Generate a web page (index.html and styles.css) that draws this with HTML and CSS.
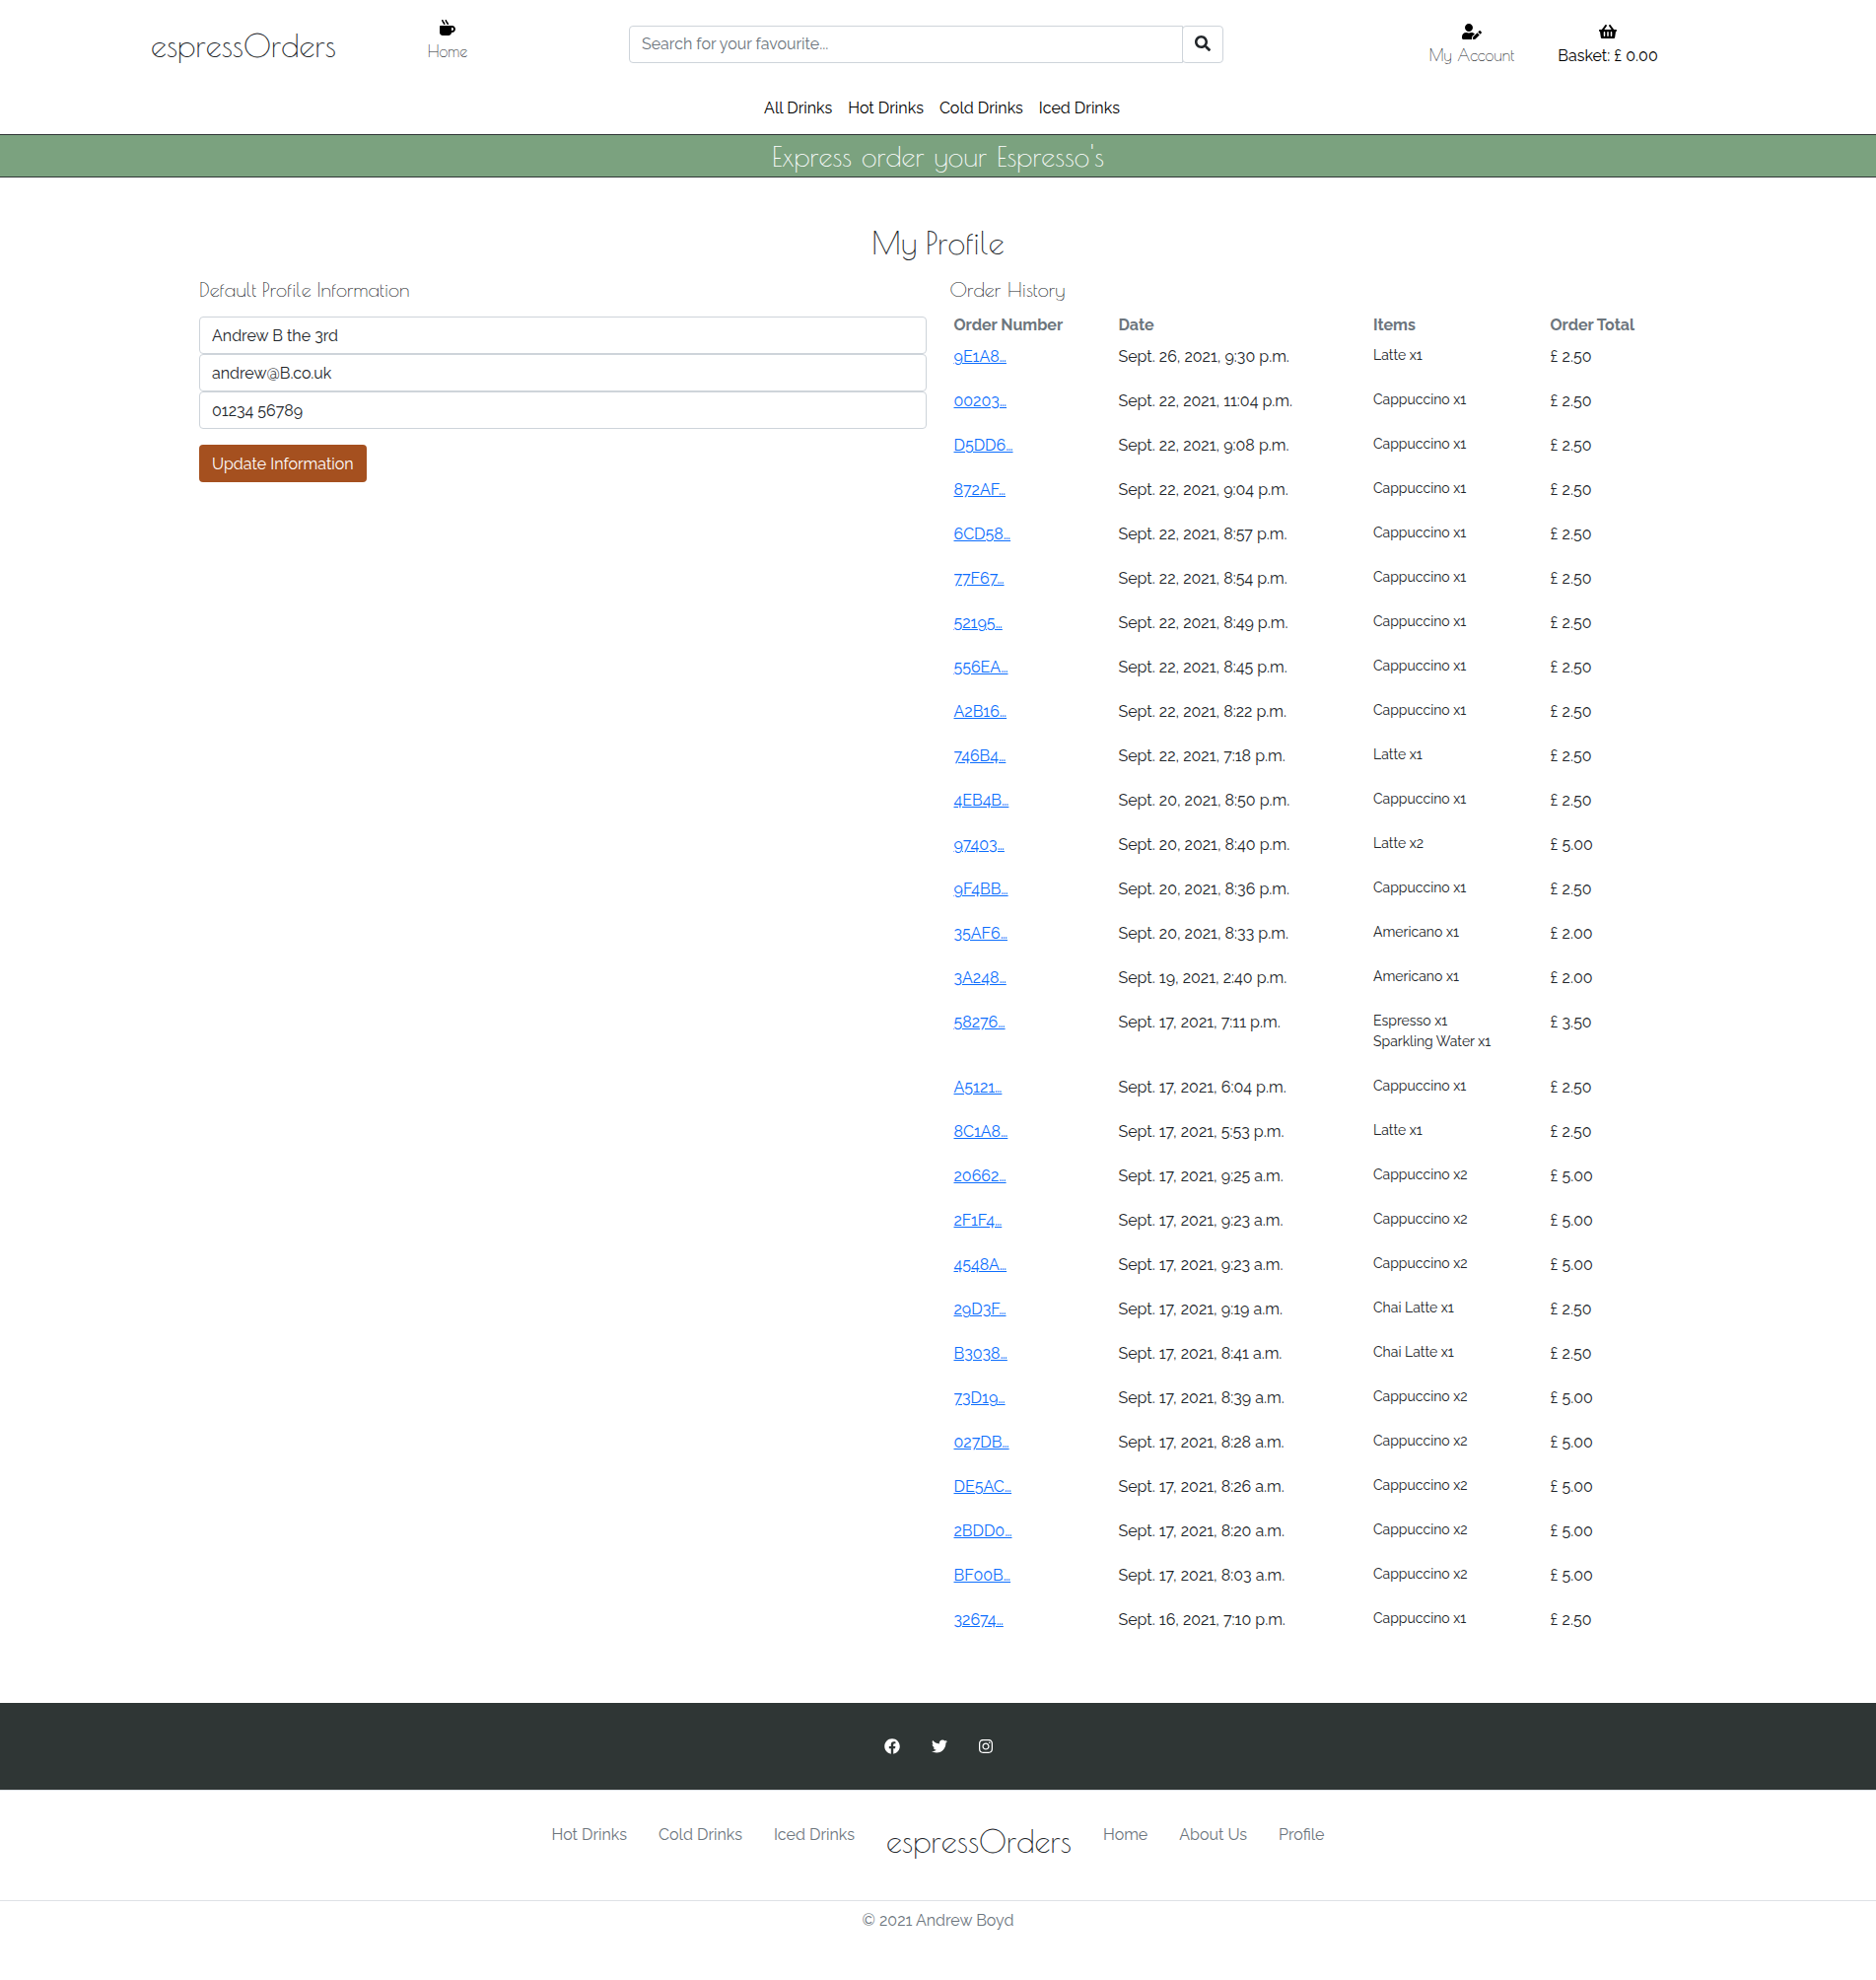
FILE: index.html
```html
<!DOCTYPE html>
<html lang="en">
<head>
<meta charset="utf-8">
<title>espressOrders - My Profile</title>
<link rel="stylesheet" href="styles.css">
</head>
<body>
<header class="header">
  <div class="header-main">
    <a class="logo" href="#">espressOrders</a>
    <a class="nav-icon home" href="#">
      <svg width="16" height="16" viewBox="0 0 512 512"><path d="M127.1 146.5c1.3 7.7 8 13.5 16 13.5h16.5c9.8 0 17.6-8.5 16.3-18-3.8-28.2-16.4-54.2-36.6-74.7-14.4-14.7-23.6-33.3-26.4-53.5C111.8 5.9 105 0 96.8 0H80.4C70.6 0 63 8.5 64.1 18c3.9 31.9 18 61.3 40.6 84.4 12 12.2 19.7 27.5 22.4 44.1zm112 0c1.3 7.7 8 13.5 16 13.5h16.5c9.8 0 17.6-8.5 16.3-18-3.8-28.2-16.4-54.2-36.6-74.7-14.4-14.7-23.6-33.3-26.4-53.5C223.8 5.9 217 0 208.8 0h-16.4c-9.8 0-17.5 8.5-16.3 18 3.9 31.9 18 61.3 40.6 84.4 12 12.2 19.7 27.5 22.4 44.1zM400 192H32c-17.7 0-32 14.3-32 32v192c0 53 43 96 96 96h192c53 0 96-43 96-96h16c61.8 0 112-50.2 112-112s-50.2-112-112-112zm0 160h-16v-96h16c26.5 0 48 21.5 48 48s-21.5 48-48 48z"/></svg>
      <span class="thin">Home</span>
    </a>
    <form class="search">
      <input class="search-input" type="text" placeholder="Search for your favourite...">
      <button class="search-btn" type="button" aria-label="Search"><svg width="16" height="16" viewBox="0 0 512 512"><path d="M505 442.7L405.3 343c-4.5-4.5-10.6-7-17-7H372c27.6-35.3 44-79.7 44-128C416 93.1 322.9 0 208 0S0 93.1 0 208s93.1 208 208 208c48.3 0 92.7-16.4 128-44v16.3c0 6.4 2.5 12.5 7 17l99.7 99.7c9.4 9.4 24.6 9.4 33.9 0l28.3-28.3c9.4-9.4 9.4-24.6.1-34zM208 336c-70.7 0-128-57.2-128-128 0-70.7 57.2-128 128-128 70.7 0 128 57.2 128 128 0 70.7-57.2 128-128 128z"/></svg></button>
    </form>
    <a class="nav-icon account" href="#">
      <svg width="20" height="16" viewBox="0 0 640 512"><path d="M224 256c70.7 0 128-57.3 128-128S294.7 0 224 0 96 57.3 96 128s57.3 128 128 128zm89.6 32h-16.7c-22.2 10.2-46.9 16-72.9 16s-50.6-5.8-72.9-16h-16.7C60.2 288 0 348.2 0 422.4V464c0 26.5 21.5 48 48 48h274.9c-2.4-6.8-3.4-14-2.6-21.3l6.8-60.9 1.2-11.1 7.9-7.9 77.3-77.3c-24.5-27.7-60-45.5-99.9-45.5zm45.3 145.3l-6.8 61c-1.1 10.2 7.5 18.8 17.6 17.6l60.9-6.8 137.9-137.9-71.7-71.7-137.9 137.8zM633 268.9L595.1 231c-9.3-9.3-24.5-9.3-33.8 0l-37.8 37.8-4.1 4.1 71.8 71.7 41.8-41.8c9.3-9.4 9.3-24.5 0-33.9z"/></svg>
      <span class="thin">My Account</span>
    </a>
    <a class="nav-icon basket" href="#">
      <svg width="18" height="16" viewBox="0 0 576 512"><path d="M576 216v16c0 13.255-10.745 24-24 24h-8l-26.113 182.788C514.509 462.435 494.257 480 470.37 480H105.63c-23.887 0-44.139-17.565-47.518-41.212L32 256h-8c-13.255 0-24-10.745-24-24v-16c0-13.255 10.745-24 24-24h67.341l106.78-146.821c10.395-14.292 30.407-17.453 44.701-7.058 14.293 10.395 17.453 30.408 7.058 44.701L170.477 192h235.046L326.12 82.821c-10.395-14.292-7.234-34.306 7.059-44.701 14.291-10.395 34.306-7.235 44.701 7.058L484.659 192H552c13.255 0 24 10.745 24 24zM312 392V280c0-13.255-10.745-24-24-24s-24 10.745-24 24v112c0 13.255 10.745 24 24 24s24-10.745 24-24zm112 0V280c0-13.255-10.745-24-24-24s-24 10.745-24 24v112c0 13.255 10.745 24 24 24s24-10.745 24-24zm-224 0V280c0-13.255-10.745-24-24-24s-24 10.745-24 24v112c0 13.255 10.745 24 24 24s24-10.745 24-24z"/></svg>
      <span>Basket: £ 0.00</span>
    </a>
  </div>
  <nav class="main-nav">
    <a href="#">All Drinks</a><a href="#">Hot Drinks</a><a href="#">Cold Drinks</a><a href="#">Iced Drinks</a>
  </nav>
</header>
<div class="banner">Express order your Espresso's</div>

<main class="main">
  <h1 class="title">My Profile</h1>
  <div class="columns">
    <section class="column">
      <h2 class="subtitle info">Default Profile Information</h2>
      <form class="profile-form">
        <input class="field" type="text" value="Andrew B the 3rd">
        <input class="field" type="text" value="andrew@B.co.uk">
        <input class="field" type="text" value="01234 56789">
        <button class="update-btn" type="button">Update Information</button>
      </form>
    </section>
    <section class="column">
      <h2 class="subtitle">Order History</h2>
      <table class="orders">
        <thead><tr><th class="c-num">Order Number</th><th class="c-date">Date</th><th class="c-items">Items</th><th class="c-total">Order Total</th></tr></thead>
        <tbody>
          <tr><td><a href="#">9E1A8…</a></td><td>Sept. 26, 2021, 9:30 p.m.</td><td>Latte x1</td><td>£ 2.50</td></tr>
          <tr><td><a href="#">00203…</a></td><td>Sept. 22, 2021, 11:04 p.m.</td><td>Cappuccino x1</td><td>£ 2.50</td></tr>
          <tr><td><a href="#">D5DD6…</a></td><td>Sept. 22, 2021, 9:08 p.m.</td><td>Cappuccino x1</td><td>£ 2.50</td></tr>
          <tr><td><a href="#">872AF…</a></td><td>Sept. 22, 2021, 9:04 p.m.</td><td>Cappuccino x1</td><td>£ 2.50</td></tr>
          <tr><td><a href="#">6CD58…</a></td><td>Sept. 22, 2021, 8:57 p.m.</td><td>Cappuccino x1</td><td>£ 2.50</td></tr>
          <tr><td><a href="#">77F67…</a></td><td>Sept. 22, 2021, 8:54 p.m.</td><td>Cappuccino x1</td><td>£ 2.50</td></tr>
          <tr><td><a href="#">52195…</a></td><td>Sept. 22, 2021, 8:49 p.m.</td><td>Cappuccino x1</td><td>£ 2.50</td></tr>
          <tr><td><a href="#">556EA…</a></td><td>Sept. 22, 2021, 8:45 p.m.</td><td>Cappuccino x1</td><td>£ 2.50</td></tr>
          <tr><td><a href="#">A2B16…</a></td><td>Sept. 22, 2021, 8:22 p.m.</td><td>Cappuccino x1</td><td>£ 2.50</td></tr>
          <tr><td><a href="#">746B4…</a></td><td>Sept. 22, 2021, 7:18 p.m.</td><td>Latte x1</td><td>£ 2.50</td></tr>
          <tr><td><a href="#">4EB4B…</a></td><td>Sept. 20, 2021, 8:50 p.m.</td><td>Cappuccino x1</td><td>£ 2.50</td></tr>
          <tr><td><a href="#">97403…</a></td><td>Sept. 20, 2021, 8:40 p.m.</td><td>Latte x2</td><td>£ 5.00</td></tr>
          <tr><td><a href="#">9F4BB…</a></td><td>Sept. 20, 2021, 8:36 p.m.</td><td>Cappuccino x1</td><td>£ 2.50</td></tr>
          <tr><td><a href="#">35AF6…</a></td><td>Sept. 20, 2021, 8:33 p.m.</td><td>Americano x1</td><td>£ 2.00</td></tr>
          <tr><td><a href="#">3A248…</a></td><td>Sept. 19, 2021, 2:40 p.m.</td><td>Americano x1</td><td>£ 2.00</td></tr>
          <tr><td><a href="#">58276…</a></td><td>Sept. 17, 2021, 7:11 p.m.</td><td>Espresso x1<br>Sparkling Water x1</td><td>£ 3.50</td></tr>
          <tr><td><a href="#">A5121…</a></td><td>Sept. 17, 2021, 6:04 p.m.</td><td>Cappuccino x1</td><td>£ 2.50</td></tr>
          <tr><td><a href="#">8C1A8…</a></td><td>Sept. 17, 2021, 5:53 p.m.</td><td>Latte x1</td><td>£ 2.50</td></tr>
          <tr><td><a href="#">20662…</a></td><td>Sept. 17, 2021, 9:25 a.m.</td><td>Cappuccino x2</td><td>£ 5.00</td></tr>
          <tr><td><a href="#">2F1F4…</a></td><td>Sept. 17, 2021, 9:23 a.m.</td><td>Cappuccino x2</td><td>£ 5.00</td></tr>
          <tr><td><a href="#">4548A…</a></td><td>Sept. 17, 2021, 9:23 a.m.</td><td>Cappuccino x2</td><td>£ 5.00</td></tr>
          <tr><td><a href="#">29D3F…</a></td><td>Sept. 17, 2021, 9:19 a.m.</td><td>Chai Latte x1</td><td>£ 2.50</td></tr>
          <tr><td><a href="#">B3038…</a></td><td>Sept. 17, 2021, 8:41 a.m.</td><td>Chai Latte x1</td><td>£ 2.50</td></tr>
          <tr><td><a href="#">73D19…</a></td><td>Sept. 17, 2021, 8:39 a.m.</td><td>Cappuccino x2</td><td>£ 5.00</td></tr>
          <tr><td><a href="#">027DB…</a></td><td>Sept. 17, 2021, 8:28 a.m.</td><td>Cappuccino x2</td><td>£ 5.00</td></tr>
          <tr><td><a href="#">DE5AC…</a></td><td>Sept. 17, 2021, 8:26 a.m.</td><td>Cappuccino x2</td><td>£ 5.00</td></tr>
          <tr><td><a href="#">2BDD0…</a></td><td>Sept. 17, 2021, 8:20 a.m.</td><td>Cappuccino x2</td><td>£ 5.00</td></tr>
          <tr><td><a href="#">BF00B…</a></td><td>Sept. 17, 2021, 8:03 a.m.</td><td>Cappuccino x2</td><td>£ 5.00</td></tr>
          <tr><td><a href="#">32674…</a></td><td>Sept. 16, 2021, 7:10 p.m.</td><td>Cappuccino x1</td><td>£ 2.50</td></tr>
        </tbody>
      </table>
    </section>
  </div>
</main>

<footer class="footer">
  <div class="social">
    <svg width="16" height="16" viewBox="0 0 512 512"><path d="M504 256C504 119 393 8 256 8S8 119 8 256c0 123.78 90.69 226.38 209.25 245V327.69h-63V256h63v-54.64c0-62.15 37-96.48 93.67-96.48 27.14 0 55.52 4.84 55.52 4.84v61h-31.28c-30.8 0-40.41 19.12-40.41 38.73V256h68.78l-11 71.69h-57.78V501C413.31 482.38 504 379.78 504 256z"/></svg>
    <svg width="16" height="16" viewBox="0 0 512 512"><path d="M459.37 151.716c.325 4.548.325 9.097.325 13.645 0 138.72-105.583 298.558-298.558 298.558-59.452 0-114.68-17.219-161.137-47.106 8.447.974 16.568 1.299 25.34 1.299 49.055 0 94.213-16.568 130.274-44.832-46.132-.975-84.792-31.188-98.112-72.772 6.498.974 12.995 1.624 19.818 1.624 9.421 0 18.843-1.3 27.614-3.573-48.081-9.747-84.143-51.98-84.143-102.985v-1.299c13.969 7.797 30.214 12.67 47.431 13.319-28.264-18.843-46.781-51.005-46.781-87.391 0-19.492 5.197-37.36 14.294-52.954 51.655 63.675 129.3 105.258 216.365 109.807-1.624-7.797-2.599-15.918-2.599-24.04 0-57.828 46.782-104.934 104.934-104.934 30.213 0 57.502 12.67 76.67 33.137 23.715-4.548 46.456-13.32 66.599-25.34-7.798 24.366-24.366 44.833-46.132 57.827 21.117-2.273 41.584-8.122 60.426-16.243-14.292 20.791-32.161 39.308-52.628 54.253z"/></svg>
    <svg width="14" height="16" viewBox="0 0 448 512"><path d="M224.1 141c-63.6 0-114.9 51.3-114.9 114.9s51.3 114.9 114.9 114.9S339 319.5 339 255.9 287.7 141 224.1 141zm0 189.6c-41.1 0-74.7-33.5-74.7-74.7s33.5-74.7 74.7-74.7 74.7 33.5 74.7 74.7-33.6 74.7-74.7 74.7zm146.4-194.3c0 14.9-12 26.8-26.8 26.8-14.9 0-26.8-12-26.8-26.8s12-26.8 26.8-26.8 26.8 12 26.8 26.8zm76.1 27.2c-1.7-35.9-9.9-67.7-36.2-93.9-26.2-26.2-58-34.4-93.9-36.2-37-2.1-147.9-2.1-184.9 0-35.8 1.7-67.6 9.9-93.9 36.1s-34.4 58-36.2 93.9c-2.1 37-2.1 147.9 0 184.9 1.7 35.9 9.9 67.7 36.2 93.9s58 34.4 93.9 36.2c37 2.1 147.9 2.1 184.9 0 35.9-1.7 67.7-9.9 93.9-36.2 26.2-26.2 34.4-58 36.2-93.9 2.1-37 2.1-147.8 0-184.8zM398.8 388c-7.8 19.6-22.9 34.7-42.6 42.6-29.5 11.7-99.5 9-132.1 9s-102.7 2.6-132.1-9c-19.6-7.8-34.7-22.9-42.6-42.6-11.7-29.5-9-99.5-9-132.1s-2.6-102.7 9-132.1c7.8-19.6 22.9-34.7 42.6-42.6 29.5-11.7 99.5-9 132.1-9s102.7-2.6 132.1 9c19.6 7.8 34.7 22.9 42.6 42.6 11.7 29.5 9 99.5 9 132.1s2.7 102.7-9 132.1z"/></svg>
  </div>
  <nav class="footer-nav">
    <a href="#">Hot Drinks</a><a href="#">Cold Drinks</a><a href="#">Iced Drinks</a>
    <a class="logo" href="#">espressOrders</a>
    <a href="#">Home</a><a href="#">About Us</a><a href="#">Profile</a>
  </nav>
  <p class="copyright">© 2021 Andrew Boyd</p>
</footer>
</body>
</html>
```
FILE: styles.css
```css
* { box-sizing: border-box; }

body {
  margin: 0;
  background: #fff;
  color: #212529;
  font: 400 16px/24px "Raleway", "Open Sans", sans-serif;
}

a { color: inherit; text-decoration: none; }
svg { display: block; fill: currentColor; }
input, button { font: inherit; color: inherit; margin: 0; }

.logo, .thin, .banner, .title, .subtitle {
  font-family: "Poiret One", "Lato", sans-serif;
  font-weight: 400;
  font-kerning: none;
  font-variant-ligatures: none;
  word-spacing: 0.12em;
}
.logo { font-size: 32px; line-height: 42px; color: #212529; }
.thin { color: #212529; }

/* header */
.header { height: 136px; color: #000; }
.header-main {
  display: grid;
  grid-template-columns: 380px 148px 110px 603px 183px 138px 138px;
  height: 98px;
  align-items: start;
}
.header-main .logo { padding: 25px 0 0 153px; }
.nav-icon { display: flex; flex-direction: column; align-items: center; gap: 4px; white-space: nowrap; }
.home { padding-top: 20px; }
.search { grid-column: 4; display: flex; margin-top: 26px; }
.account { grid-column: 6; padding-top: 24px; }
.basket { padding-top: 24px; gap: 5px; }
.search-input {
  flex: 1;
  height: 38px;
  padding: 5px 12px 7px;
  border: 1px solid #ced4da;
  border-radius: 4px 0 0 4px;
  background: #fff;
}
.search-input::placeholder { color: #6c757d; opacity: 1; }
.search-btn {
  width: 42px;
  height: 38px;
  margin-left: -1px;
  padding: 0 0 2px;
  display: grid;
  place-items: center;
  border: 1px solid #ced4da;
  border-radius: 4px;
  background: #fff;
  color: #212529;
}
.main-nav { display: flex; justify-content: center; gap: 16px; padding-left: 8px; }

.banner {
  height: 44px;
  line-height: 43px;
  border: solid #2f3635;
  border-width: 1px 0;
  background: #7ba27f;
  color: #fff;
  font-size: 28px;
  word-spacing: 0.14em;
  text-align: center;
}

/* profile */
.main { width: 1523px; height: 1547px; margin: 0 auto; padding-top: 46px; }
.title { margin: 0 0 16px; font-size: 32px; line-height: 40px; word-spacing: 0.04em; text-align: center; }
.columns { display: grid; grid-template-columns: 1fr 1fr; }
.column { padding: 0 12px; }
.subtitle { margin: 0; font-size: 20px; line-height: 24px; }
.info { word-spacing: 0.06em; }
.profile-form { display: flex; flex-direction: column; align-items: flex-start; padding-top: 15px; }
.field {
  width: 100%;
  height: 38px;
  padding: 6px 12px;
  border: 1px solid #ced4da;
  border-radius: 4px;
  background: #fff;
}
.update-btn {
  height: 38px;
  margin-top: 16px;
  padding: 1px 13px 0;
  border: 0;
  border-radius: 4px;
  background: #a5501f;
  color: #fff;
}

.orders { width: 100%; margin-top: 8px; border-collapse: collapse; table-layout: fixed; }
.orders th, .orders td { padding: 4px; text-align: left; vertical-align: top; white-space: nowrap; }
.orders th { color: #6c757d; font-weight: 700; }
.orders td { height: 45px; }
.orders td:nth-child(3) { padding-bottom: 20px; font-size: 14px; line-height: 21px; }
.orders td a { color: #0d6efd; text-decoration: underline; }
.c-num { width: 167px; }
.c-date { width: 258.5px; }
.c-items { width: 179.5px; }

/* footer */
.social {
  display: flex;
  justify-content: center;
  align-items: center;
  gap: 32px;
  height: 88px;
  background: #2f3635;
  color: #fff;
}
.footer-nav {
  display: flex;
  justify-content: center;
  gap: 32px;
  height: 113px;
  padding-top: 33px;
  border: solid #dee2e6;
  border-width: 1px 0;
  color: #6c757d;
}
.footer-nav .logo { margin-top: -3px; }
.copyright { margin: 0; padding: 8px 0 48px; text-align: center; color: #6c757d; }
```
